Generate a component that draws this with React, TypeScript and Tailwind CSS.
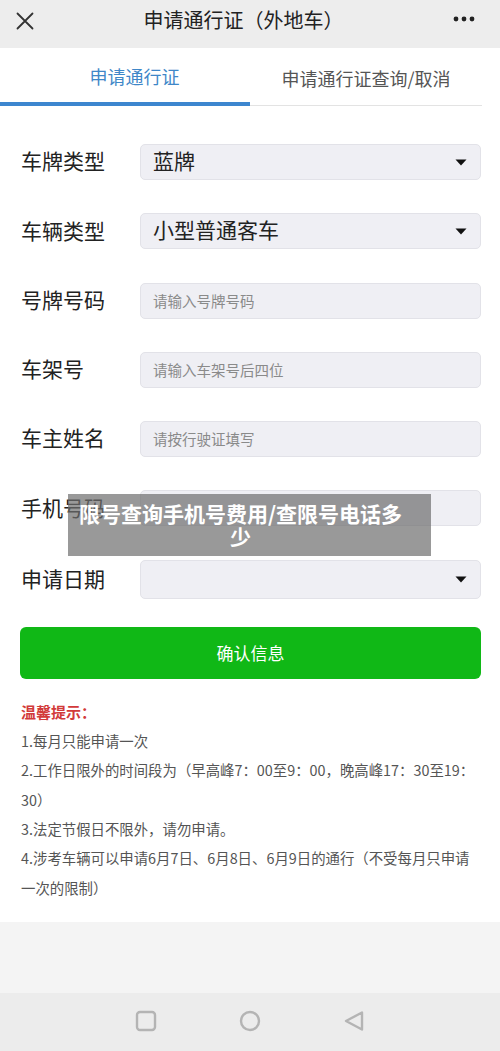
import React from "react";

const font = { fontFamily: '"Noto Sans CJK SC", "Noto Sans", sans-serif' };

function Caret() {
  return (
    <svg width="12" height="7" viewBox="0 0 12 7" className="shrink-0">
      <path d="M0.5 0.5h11L6 6.5z" fill="#111" />
    </svg>
  );
}

interface RowProps {
  label: string;
  value?: string;
  placeholder?: string;
  select?: boolean;
  tall?: boolean;
}

function Row({ label, value, placeholder, select, tall }: RowProps) {
  return (
    <div className="flex items-center pl-[21px] pr-[19px]">
      <div className="w-[119px] -translate-y-[1px] text-[21px] text-[#222]">{label}</div>
      <div
        className={`flex flex-1 items-center justify-between rounded-[5px] border border-[#e2e2e8] bg-[#efeff4] pl-[12px] pr-[13px] ${
          tall ? "h-[39px]" : "h-[36px]"
        }`}
      >
        {value ? (
          <span className="-translate-y-[2px] text-[21px] leading-none text-[#222]">{value}</span>
        ) : (
          <span className="text-[14.5px] text-[#8a8a8a]">{placeholder}</span>
        )}
        {select && <Caret />}
      </div>
    </div>
  );
}

export default function App() {
  const tips = [
    "1.每月只能申请一次",
    "2.工作日限外的时间段为（早高峰7：00至9：00，晚高峰17：30至19：30）",
    "3.法定节假日不限外，请勿申请。",
    "4.涉考车辆可以申请6月7日、6月8日、6月9日的通行（不受每月只申请一次的限制）",
  ];

  return (
    <div className="relative flex h-[1051px] w-[500px] flex-col bg-white" style={font}>
      {/* top bar */}
      <div className="flex h-[48px] items-center justify-between bg-[#ededed] px-[16px]">
        <svg width="18" height="18" viewBox="0 0 18 18" className="-translate-y-[3px]">
          <path d="M1.5 1.5l15 15M16.5 1.5l-15 15" stroke="#333" strokeWidth="1.8" strokeLinecap="round" />
        </svg>
        <div className="pb-[9px] text-[20px] text-[#222]">申请通行证（外地车）</div>
        <svg width="22" height="6" viewBox="0 0 22 6" className="mr-[9px] -translate-y-[5px]">
          <circle cx="3" cy="3" r="2.4" fill="#222" />
          <circle cx="11" cy="3" r="2.4" fill="#222" />
          <circle cx="19" cy="3" r="2.4" fill="#222" />
        </svg>
      </div>

      {/* tabs */}
      <div className="flex h-[58px] pr-[18px]">
        <div className="flex w-[250px] items-center justify-center border-b-[4px] border-[#3d86cf] pl-[19px] pt-[2px] text-[18px] text-[#3f87c8]">
          申请通行证
        </div>
        <div className="flex flex-1 items-center justify-center border-b border-[#e3e3e3] pt-[4px] text-[18px] text-[#555]">
          申请通行证查询/取消
        </div>
      </div>

      {/* form */}
      <div className="flex flex-col gap-[33.3px] pt-[38px]">
        <Row label="车牌类型" value="蓝牌" select />
        <Row label="车辆类型" value="小型普通客车" select />
        <Row label="号牌号码" placeholder="请输入号牌号码" />
        <Row label="车架号" placeholder="请输入车架号后四位" />
        <Row label="车主姓名" placeholder="请按行驶证填写" />
        <Row label="手机号码" placeholder="" />
        <Row label="申请日期" select tall />
      </div>

      <div className="pl-[20px] pr-[19px] pt-[28px]">
        <button className="flex h-[52px] w-full items-center justify-center rounded-[6px] bg-[#10b816] text-[17px] text-white">
          确认信息
        </button>
      </div>

      {/* tips */}
      <div className="pl-[21px] pr-[22px] pt-[18px] text-[14.4px] leading-[29.3px] text-[#555]">
        <div className="text-[15px] font-bold text-[#d23a3a]">温馨提示：</div>
        {tips.map((t) => (
          <div key={t}>{t}</div>
        ))}
      </div>

      <div className="mt-[20px] flex-1 bg-[#f4f4f4]" />

      {/* system nav */}
      <div className="flex h-[58px] items-center justify-center gap-[82px] bg-[#ececec] pb-[2px]">
        <svg width="22" height="22" viewBox="0 0 22 22">
          <rect x="2" y="2" width="18" height="18" rx="3" fill="none" stroke="#b4b4b4" strokeWidth="2.4" />
        </svg>
        <svg width="22" height="22" viewBox="0 0 22 22">
          <circle cx="11" cy="11" r="9" fill="none" stroke="#b4b4b4" strokeWidth="2.4" />
        </svg>
        <svg width="22" height="22" viewBox="0 0 22 22">
          <path d="M19 2.5v17L3 11z" fill="none" stroke="#b4b4b4" strokeWidth="2.4" strokeLinejoin="round" />
        </svg>
      </div>

      {/* watermark overlay */}
      <div className="absolute left-[68px] top-[494px] w-[363px] bg-[rgba(110,110,110,0.7)] pl-[3px] pr-[21px] py-[8px] text-center text-[21px] font-bold leading-[23px] text-white">
        限号查询手机号费用/查限号电话多少
      </div>
    </div>
  );
}
